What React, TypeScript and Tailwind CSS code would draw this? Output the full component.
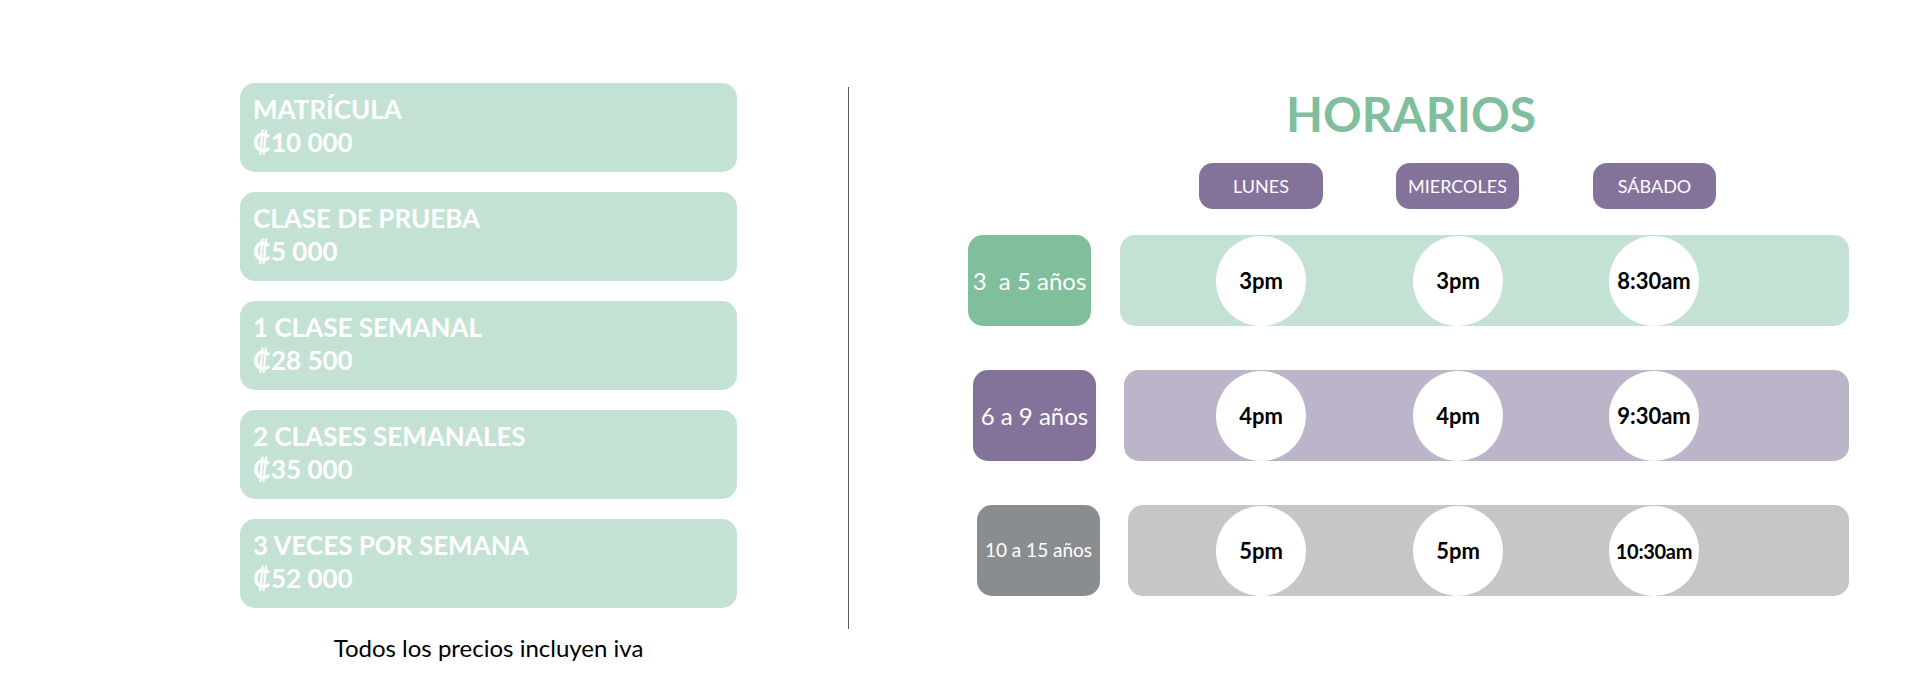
import React from "react";

const font = { fontFamily: "Lato, 'Noto Sans', sans-serif" };

const prices = [
  ["MATRÍCULA", "₡10 000"],
  ["CLASE DE PRUEBA", "₡5 000"],
  ["1 CLASE SEMANAL", "₡28 500"],
  ["2 CLASES SEMANALES", "₡35 000"],
  ["3 VECES POR SEMANA", "₡52 000"],
];

function Circle({ t, className = "", small = false }: { t: string; className?: string; small?: boolean }) {
  return (
    <div className={`w-[90px] h-[90px] rounded-full bg-white flex items-center justify-center shrink-0 ${className}`}>
      <span className={`${small ? "text-[20px] tracking-[-0.3px]" : "text-[22px]"} font-bold text-black whitespace-nowrap`}>{t}</span>
    </div>
  );
}

export default function App() {
  return (
    <div className="w-[1920px] h-[700px] bg-white flex overflow-hidden" style={font}>
      {/* Prices */}
      <div className="ml-[240px] pt-[83px] w-[497px] flex flex-col shrink-0">
        <div className="flex flex-col gap-[20px]">
          {prices.map(([a, b]) => (
            <div key={a} className="h-[89px] rounded-[15px] bg-[#c4e2d3] pl-[13px] pt-[10px] text-white font-bold text-[26px] leading-[33px]">
              <div>{a}</div>
              <div>{b}</div>
            </div>
          ))}
        </div>
        <div className="mt-[22px] text-center text-[24px] text-black">Todos los precios incluyen iva</div>
      </div>

      {/* Divider */}
      <div className="ml-[111px] mt-[87px] w-px h-[542px] bg-[#5a5a5a] shrink-0" />

      {/* Schedule */}
      <div className="flex flex-col shrink-0">
        <div className="w-[1124px] mt-[90px] text-center text-[48px] leading-none font-bold text-[#80bf9c]">HORARIOS</div>
        <div className="flex mt-[25px] ml-[350px] text-white text-[18px]">
          <div className="w-[124px] h-[46px] rounded-[14px] bg-[#83729a] flex items-center justify-center">LUNES</div>
          <div className="ml-[73px] w-[123px] h-[46px] rounded-[14px] bg-[#83729a] flex items-center justify-center">MIERCOLES</div>
          <div className="ml-[74px] w-[123px] h-[46px] rounded-[14px] bg-[#83729a] flex items-center justify-center">SÁBADO</div>
        </div>

        <div className="flex mt-[26px]">
          <div className="ml-[119px] w-[123px] h-[91px] rounded-[15px] bg-[#7fbf9c] flex items-center justify-center text-white text-[24px] whitespace-pre">3  a 5 años</div>
          <div className="ml-[29px] w-[729px] h-[91px] rounded-[15px] bg-[#c4e2d3] flex items-center pl-[96px]">
            <Circle t="3pm" />
            <Circle t="3pm" className="ml-[107px]" />
            <Circle t="8:30am" className="ml-[106px]" />
          </div>
        </div>

        <div className="flex mt-[44px]">
          <div className="ml-[124px] w-[123px] h-[91px] rounded-[15px] bg-[#83729a] flex items-center justify-center text-white text-[24px]">6 a 9 años</div>
          <div className="ml-[28px] w-[725px] h-[91px] rounded-[15px] bg-[#bcb4c8] flex items-center pl-[92px]">
            <Circle t="4pm" />
            <Circle t="4pm" className="ml-[107px]" />
            <Circle t="9:30am" className="ml-[106px]" />
          </div>
        </div>

        <div className="flex mt-[44px]">
          <div className="ml-[128px] w-[123px] h-[91px] rounded-[15px] bg-[#8a8d90] flex items-center justify-center text-white text-[19px]">10 a 15 años</div>
          <div className="ml-[28px] w-[721px] h-[91px] rounded-[15px] bg-[#c6c6c6] flex items-center pl-[88px]">
            <Circle t="5pm" />
            <Circle t="5pm" className="ml-[107px]" />
            <Circle t="10:30am" className="ml-[106px]" small />
          </div>
        </div>
      </div>
    </div>
  );
}
